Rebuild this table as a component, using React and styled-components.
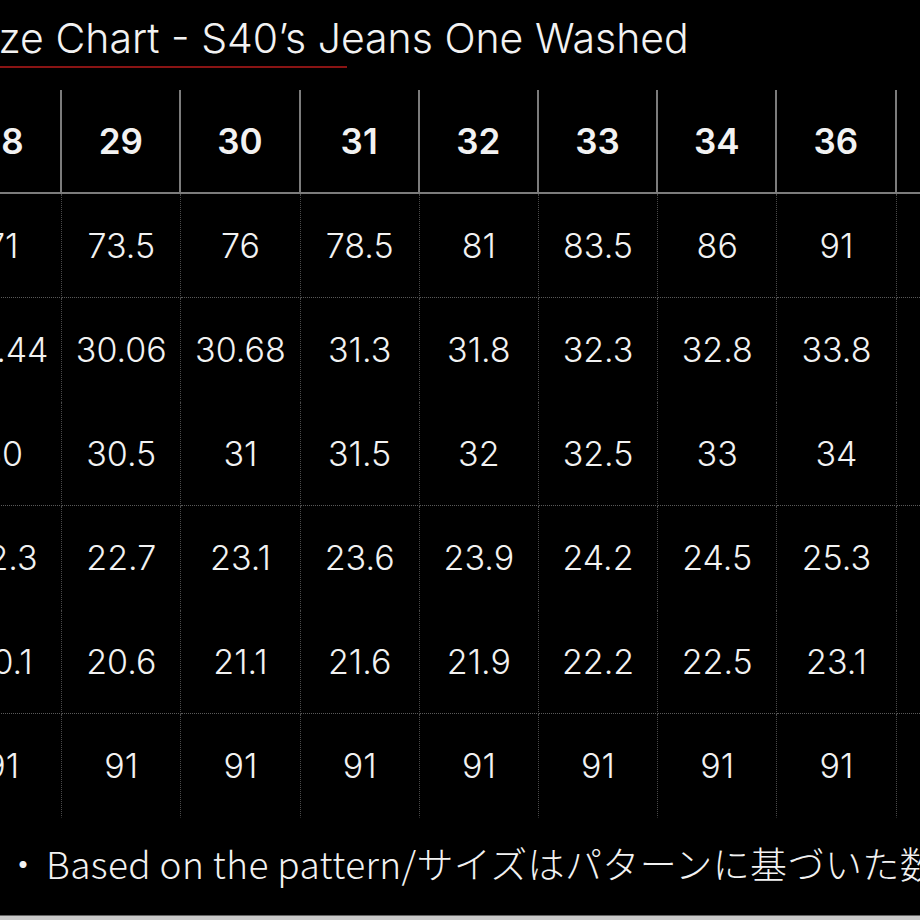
import React from "react";
import styled, { createGlobalStyle } from "styled-components";

const Global = createGlobalStyle`
  html, body { margin: 0; padding: 0; background: #000; }
  body { width: 920px; height: 920px; overflow: hidden; }
`;

const Page = styled.div`
  width: 920px;
  height: 920px;
  background: #000;
  color: #f2f2f2;
  font-family: "Inter", "Noto Sans CJK JP", sans-serif;
  display: flex;
  flex-direction: column;
  overflow: hidden;
  position: relative;
`;

const TitleBlock = styled.div`
  padding-top: 14px;
  height: 90px;
  box-sizing: border-box;
  display: flex;
  flex-direction: column;
`;

const Title = styled.h1`
  margin: 0 0 0 -37px;
  font-size: 41px;
  font-weight: 300;
  line-height: 48px;
  white-space: nowrap;
`;

const Underline = styled.div`
  margin-top: 4px;
  width: 347px;
  height: 2px;
  background: #8a1414;
`;

const Table = styled.div`
  margin-left: -57px;
  display: grid;
  grid-template-columns: repeat(9, 119.2px);
  width: max-content;
`;

const HeadCell = styled.div`
  height: 104px;
  border-right: 2px solid #7c7c7c;
  border-bottom: 2px solid #7c7c7c;
  display: flex;
  align-items: center;
  justify-content: center;
  font-weight: 600;
  font-size: 35px;
  box-sizing: border-box;
`;

const Cell = styled.div`
  height: 104px;
  border-right: 1px dotted #4a4a4a;
  border-bottom: ${(p) => (p.$line ? "1px dotted #5a5a5a" : "1px solid transparent")};
  display: flex;
  align-items: center;
  justify-content: center;
  font-weight: 300;
  font-size: 34px;
  box-sizing: border-box;
  white-space: nowrap;
`;

const Footer = styled.div`
  margin-top: 10px;
  display: flex;
  align-items: center;
  height: 70px;
  white-space: nowrap;
  font-family: "Noto Sans CJK JP", sans-serif;
  font-size: 37px;
  font-weight: 300;
`;

const Bullet = styled.span`
  flex-shrink: 0;
  width: 46px;
  text-align: center;
`;

const Note = styled.span`
  flex-shrink: 0;
  letter-spacing: 0.4px;
`;

const BottomEdge = styled.div`
  position: absolute;
  left: 0;
  right: 0;
  bottom: 0;
  height: 4px;
  background: #c9c9c9;
  border-top: 1px solid #666;
`;

const sizes = ["28", "29", "30", "31", "32", "33", "34", "36", "38"];
const rows = [
  { vals: ["71", "73.5", "76", "78.5", "81", "83.5", "86", "91", "96"], line: true },
  { vals: ["29.44", "30.06", "30.68", "31.3", "31.8", "32.3", "32.8", "33.8", "34.8"], line: false },
  { vals: ["30", "30.5", "31", "31.5", "32", "32.5", "33", "34", "35"], line: true },
  { vals: ["22.3", "22.7", "23.1", "23.6", "23.9", "24.2", "24.5", "25.3", "26.1"], line: false },
  { vals: ["20.1", "20.6", "21.1", "21.6", "21.9", "22.2", "22.5", "23.1", "23.7"], line: true },
  { vals: ["91", "91", "91", "91", "91", "91", "91", "91", "91"], line: false },
];

export default function App() {
  return (
    <Page>
      <Global />
      <TitleBlock>
        <Title>Size Chart - S40’s Jeans One Washed</Title>
        <Underline />
      </TitleBlock>
      <Table>
        {sizes.map((s) => (
          <HeadCell key={s}>{s}</HeadCell>
        ))}
        {rows.map((r, i) =>
          r.vals.map((v, j) => (
            <Cell key={i + "-" + j} $line={r.line}>
              {v}
            </Cell>
          ))
        )}
      </Table>
      <Footer>
        <Bullet>・</Bullet>
        <Note>Based on the pattern/サイズはパターンに基づいた数値です</Note>
      </Footer>
      <BottomEdge />
    </Page>
  );
}
